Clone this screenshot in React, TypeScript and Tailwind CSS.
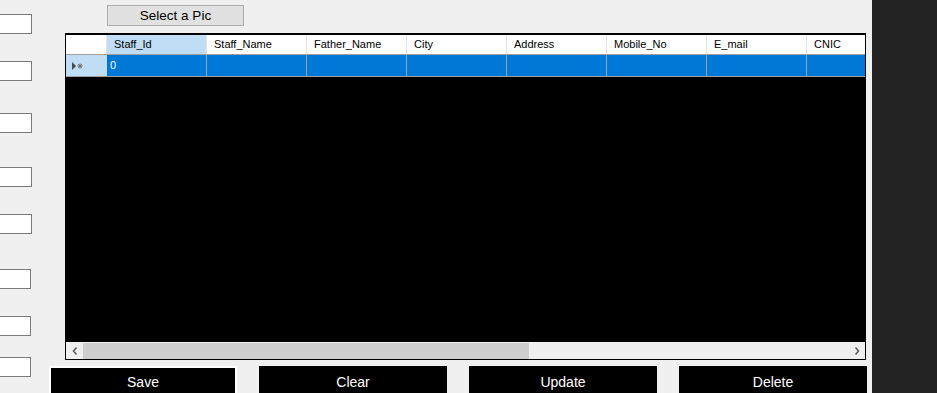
import React from "react";

const cols = ["Staff_Id", "Staff_Name", "Father_Name", "City", "Address", "Mobile_No", "E_mail", "CNIC"];

export default function App() {
  return (
    <div className="w-[937px] h-[393px] overflow-hidden flex bg-[#f0f0f0] font-['Liberation_Sans',Arial,sans-serif]">
      <div className="w-[872px] shrink-0 flex overflow-hidden">
        <div className="w-[32px] shrink-0 flex flex-col">
          <div className="mt-[14px] w-[32px] h-[20px] shrink-0 bg-white border-y border-r border-[#7a7a7a]" />
          <div className="mt-[27px] w-[32px] h-[20px] shrink-0 bg-white border-y border-r border-[#7a7a7a]" />
          <div className="mt-[32px] w-[32px] h-[20px] shrink-0 bg-white border-y border-r border-[#7a7a7a]" />
          <div className="mt-[34px] w-[32px] h-[20px] shrink-0 bg-white border-y border-r border-[#7a7a7a]" />
          <div className="mt-[27px] w-[32px] h-[20px] shrink-0 bg-white border-y border-r border-[#7a7a7a]" />
          <div className="mt-[35px] w-[31px] h-[20px] shrink-0 bg-white border-y border-r border-[#7a7a7a]" />
          <div className="mt-[27px] w-[31px] h-[20px] shrink-0 bg-white border-y border-r border-[#7a7a7a]" />
          <div className="mt-[21px] w-[31px] h-[20px] shrink-0 bg-white border-y border-r border-[#7a7a7a]" />
        </div>
        <div className="ml-[33px] flex flex-col">
          <div className="mt-[5px] ml-[42px] w-[137px] h-[21px] shrink-0 bg-[#e1e1e1] border border-[#adadad] flex items-center justify-center text-[13.5px] text-black leading-none">
            Select a Pic
          </div>
          <div className="mt-[7px] w-[801px] h-[327px] shrink-0 border border-t-2 border-black bg-black flex flex-col">
            <div className="h-[20px] shrink-0 flex bg-white border-b border-[#a0a0a0] overflow-hidden">
              <div className="w-[41px] shrink-0 bg-white border-r border-[#e5e5e5]" />
              {cols.map((c, i) => (
                <div
                  key={c}
                  className={`w-[100px] shrink-0 border-r border-[#e5e5e5] pl-[7px] flex items-center text-[11px] text-black leading-none ${i === 0 ? "bg-[#bfddf5]" : "bg-white"}`}
                >
                  {c}
                </div>
              ))}
            </div>
            <div className="h-[22px] shrink-0 flex border-b border-[#a0a0a0] overflow-hidden">
              <div className="w-[41px] shrink-0 bg-[#bfddf5] flex items-center pl-[6px]">
                <svg width="12" height="8" viewBox="0 0 12 8">
                  <polygon points="0,0 4,4 0,8" fill="#4a4a4a" />
                  <g stroke="#6a6a6a" strokeWidth="1">
                    <line x1="8" y1="1.5" x2="8" y2="6.5" />
                    <line x1="5.5" y1="4" x2="10.5" y2="4" />
                    <line x1="6.2" y1="2.2" x2="9.8" y2="5.8" />
                    <line x1="9.8" y1="2.2" x2="6.2" y2="5.8" />
                  </g>
                </svg>
              </div>
              {cols.map((c, i) => (
                <div
                  key={c}
                  className="w-[100px] shrink-0 bg-[#0078d7] border-r border-[#a0a0a0] pl-[3px] flex items-center text-[11px] text-white leading-none"
                >
                  {i === 0 ? "0" : ""}
                </div>
              ))}
            </div>
            <div className="flex-1" />
            <div className="h-[17px] shrink-0 flex bg-[#f0f0f0] pt-[1px]">
              <div className="w-[17px] shrink-0 flex items-center justify-center">
                <svg width="6" height="8" viewBox="0 0 6 8">
                  <polyline points="4.5,0.5 1.5,4 4.5,7.5" fill="none" stroke="#606060" strokeWidth="1.6" />
                </svg>
              </div>
              <div className="w-[446px] shrink-0 bg-[#cdcdcd]" />
              <div className="flex-1" />
              <div className="w-[17px] shrink-0 flex items-center justify-center">
                <svg width="6" height="8" viewBox="0 0 6 8">
                  <polyline points="1.5,0.5 4.5,4 1.5,7.5" fill="none" stroke="#606060" strokeWidth="1.6" />
                </svg>
              </div>
            </div>
          </div>
          <div className="mt-[6px] ml-[-16px] flex gap-[22px] shrink-0">
            <div className="w-[188px] h-[32px] shrink-0 bg-black border-2 border-white flex items-center justify-center text-[14px] text-white">Save</div>
            <div className="w-[188px] h-[32px] shrink-0 bg-black flex items-center justify-center text-[14px] text-white">Clear</div>
            <div className="w-[188px] h-[32px] shrink-0 bg-black flex items-center justify-center text-[14px] text-white">Update</div>
            <div className="w-[188px] h-[32px] shrink-0 bg-black flex items-center justify-center text-[14px] text-white">Delete</div>
          </div>
        </div>
      </div>
      <div className="flex-1 bg-[#222222]" />
    </div>
  );
}
